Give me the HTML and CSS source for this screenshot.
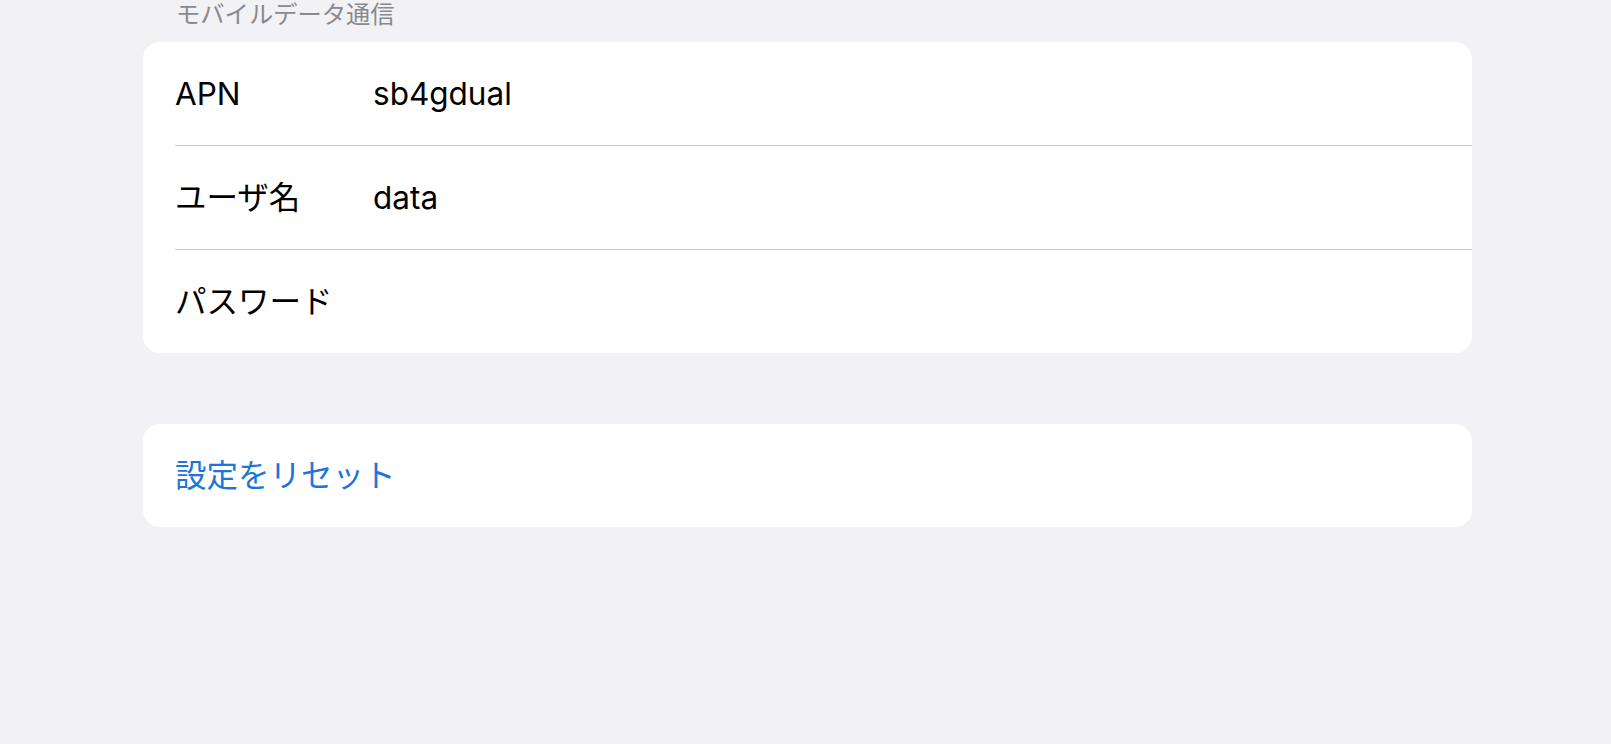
FILE: index.html
```html
<!DOCTYPE html>
<html lang="ja">
<head>
<meta charset="utf-8">
<title>モバイルデータ通信</title>
<link rel="stylesheet" href="styles.css">
</head>
<body>
<main class="page">
  <div class="section-header">モバイルデータ通信</div>
  <section class="card">
    <div class="row">
      <div class="row-inner">
        <span class="label">APN</span>
        <span class="value">sb4gdual</span>
      </div>
    </div>
    <div class="row">
      <div class="row-inner">
        <span class="label">ユーザ名</span>
        <span class="value">data</span>
      </div>
    </div>
    <div class="row">
      <div class="row-inner">
        <span class="label">パスワード</span>
        <span class="value"></span>
      </div>
    </div>
  </section>
  <section class="card card-action">
    <div class="row">
      <div class="row-inner">
        <span class="action">設定をリセット</span>
      </div>
    </div>
  </section>
</main>
</body>
</html>
```

FILE: styles.css
```css
html, body {
  margin: 0;
  padding: 0;
  background: #f2f1f6;
}

body {
  width: 1611px;
  height: 744px;
  overflow: hidden;
  font-family: Inter, "Noto Sans CJK JP", sans-serif;
  color: #000;
}

.page {
  margin-left: 143px;
  width: 1329px;
}

.section-header {
  height: 25px;
  line-height: 25px;
  font-size: 24.3px;
  color: #8a8a8e;
  padding-left: 33px;
  margin-bottom: 17px;
  font-family: "Noto Sans CJK JP", sans-serif;
}

.card {
  background: #fff;
  border-radius: 17px;
  overflow: hidden;
}

.card-action {
  margin-top: 71px;
}

.row {
  padding-left: 32px;
}

.row-inner {
  height: 103px;
  display: flex;
  align-items: center;
  border-bottom: 1px solid #c6c6c8;
  font-size: 31.5px;
  line-height: 38px;
}

.row:last-child .row-inner {
  border-bottom: none;
}

.label {
  width: 198px;
  flex: none;
}

.value {
  flex: 1;
}

.action {
  color: #1c76da;
}
```
